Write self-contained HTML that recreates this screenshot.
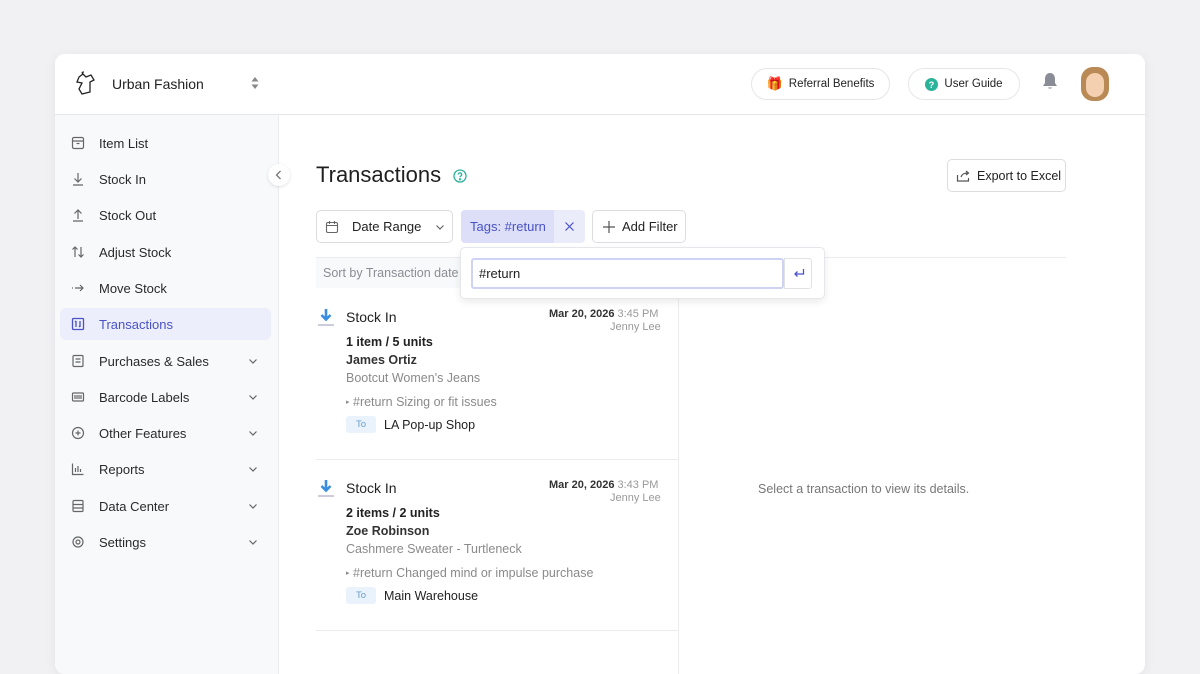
<!DOCTYPE html>
<html><head><meta charset="utf-8"><style>
*{box-sizing:border-box;margin:0;padding:0}
body{width:1200px;height:645px;background:#f1f1f3;font-family:"Liberation Sans",sans-serif;color:#222;position:relative;overflow:hidden}
.card{position:absolute;left:55px;top:54px;width:1090px;height:620px;background:#fff;border-radius:10px;box-shadow:0 2px 12px rgba(0,0,0,.06);overflow:hidden}
.hdr{position:absolute;left:0;top:0;width:100%;height:61px;border-bottom:1px solid #e6e7ea;background:#fff}
.side{position:absolute;left:0;top:61px;width:224px;bottom:0;background:#f8f9fb;border-right:1px solid #ececef}
.abs{position:absolute}
.nav{position:absolute;left:5px;width:211px;height:32px;display:flex;align-items:center;font-size:13px;color:#2a2a2a}
.nav svg{position:absolute;left:11px}
.nav span{position:absolute;left:39px}
.nav .ch{position:absolute;left:187px}
.pill{position:absolute;height:32px;border:1px solid #e5e6ea;border-radius:16px;font-size:11.5px;display:flex;align-items:center;justify-content:center;gap:6px;color:#222}
.btn{position:absolute;border:1px solid #dcdde1;border-radius:5px;background:#fff;display:flex;align-items:center;font-size:13px}
.t{position:absolute;white-space:nowrap}
</style></head><body>
<div class="card">
 <div class="hdr">
  <svg class="abs" style="left:18px;top:17px" width="24" height="26" viewBox="0 0 24 26" fill="none" stroke="#222" stroke-width="1.3"><path d="M6 6 L10 3 L13 6 L18 4 L21 9 L17 11 L17 21 L9 23 L6 18 L9 12 L4 11 Z M10 3 Q8 1 11 1"/></svg>
  <div class="t" style="left:57px;top:22px;font-size:14px;color:#222">Urban Fashion</div>
  <svg class="abs" style="left:195px;top:22px" width="10" height="14" viewBox="0 0 10 14" fill="#888"><path d="M5 1 L8.5 5.5 H1.5Z M5 13 L8.5 8.5 H1.5Z"/></svg>
  <div class="pill" style="left:696px;top:14px;width:139px"><span style="color:#f0a030;font-size:13px">🎁</span>Referral Benefits</div>
  <div class="pill" style="left:853px;top:14px;width:112px"><svg width="13" height="13" viewBox="0 0 14 14"><circle cx="7" cy="7" r="7" fill="#2bb39a"/><text x="7" y="10.5" font-size="10" fill="#fff" text-anchor="middle" font-weight="bold" font-family="Liberation Sans">?</text></svg>User Guide</div>
  <svg class="abs" style="left:987px;top:18px" width="16" height="18" viewBox="0 0 16 18" fill="#8a8d96"><path d="M8 1 C4.5 1 3 4 3 7 V11 L1 14 H15 L13 11 V7 C13 4 11.5 1 8 1Z M6 15.5 H10 C10 17 6 17 6 15.5Z"/></svg>
  <div class="abs" style="left:1026px;top:13px;width:28px;height:34px;border-radius:12px;background:#b98a55"><div style="position:absolute;left:5px;top:6px;width:18px;height:24px;border-radius:9px;background:#f4d0b0"></div></div>
 </div>
 <div class="side">
  <div class="nav" style="top:12px"><svg width="14" height="14" viewBox="0 0 14 14" fill="none" stroke="#666" stroke-width="1.2"><rect x="1.5" y="1.5" width="11" height="11" rx="1.5"/><path d="M1.5 5h11M5.5 7.5h3"/></svg><span>Item List</span></div>
  <div class="nav" style="top:48px"><svg width="14" height="14" viewBox="0 0 14 14" fill="none" stroke="#666" stroke-width="1.2"><path d="M7 1v9M3.5 6.5 7 10l3.5-3.5M2 13h10"/></svg><span>Stock In</span></div>
  <div class="nav" style="top:84px"><svg width="14" height="14" viewBox="0 0 14 14" fill="none" stroke="#666" stroke-width="1.2"><path d="M7 11V2M3.5 5.5 7 2l3.5 3.5M2 13h10"/></svg><span>Stock Out</span></div>
  <div class="nav" style="top:121px"><svg width="14" height="14" viewBox="0 0 14 14" fill="none" stroke="#666" stroke-width="1.2"><path d="M4 12V2M1.5 4.5 4 2l2.5 2.5M10 2v10M7.5 9.5 10 12l2.5-2.5"/></svg><span>Adjust Stock</span></div>
  <div class="nav" style="top:157px"><svg width="14" height="14" viewBox="0 0 14 14" fill="none" stroke="#666" stroke-width="1.2"><path d="M1 7h1M4 7h8M9 4l3 3-3 3"/></svg><span>Move Stock</span></div>
  <div class="nav" style="top:193px;background:#eceefb;border-radius:6px;color:#4a52c8"><svg width="14" height="14" viewBox="0 0 14 14" fill="none" stroke="#4a52c8" stroke-width="1.3"><rect x="1.5" y="1.5" width="11" height="11" rx="1"/><path d="M5 4v6M4 5l1-1M9 4v6M8 9l1 1"/></svg><span>Transactions</span></div>
  <div class="nav" style="top:230px"><svg width="14" height="14" viewBox="0 0 14 14" fill="none" stroke="#666" stroke-width="1.2"><rect x="2" y="1.5" width="10" height="11" rx="1"/><path d="M4.5 5h5M4.5 8h5"/></svg><span>Purchases &amp; Sales</span><svg class="ch" width="12" height="12" viewBox="0 0 12 12" fill="none" stroke="#666" stroke-width="1.2"><path d="M2.5 4.5 6 8l3.5-3.5"/></svg></div>
  <div class="nav" style="top:266px"><svg width="14" height="14" viewBox="0 0 14 14" fill="none" stroke="#666" stroke-width="1.2"><rect x="1.5" y="3" width="11" height="8" rx="1"/><path d="M4 5v4M6 5v4M8 5v4M10 5v4"/></svg><span>Barcode Labels</span><svg class="ch" width="12" height="12" viewBox="0 0 12 12" fill="none" stroke="#666" stroke-width="1.2"><path d="M2.5 4.5 6 8l3.5-3.5"/></svg></div>
  <div class="nav" style="top:302px"><svg width="14" height="14" viewBox="0 0 14 14" fill="none" stroke="#666" stroke-width="1.2"><circle cx="7" cy="7" r="5.5"/><path d="M7 4.5v5M4.5 7h5"/></svg><span>Other Features</span><svg class="ch" width="12" height="12" viewBox="0 0 12 12" fill="none" stroke="#666" stroke-width="1.2"><path d="M2.5 4.5 6 8l3.5-3.5"/></svg></div>
  <div class="nav" style="top:338px"><svg width="14" height="14" viewBox="0 0 14 14" fill="none" stroke="#666" stroke-width="1.2"><path d="M1.5 1.5v11h11M4.5 10V6M7 10V4M9.5 10V7"/></svg><span>Reports</span><svg class="ch" width="12" height="12" viewBox="0 0 12 12" fill="none" stroke="#666" stroke-width="1.2"><path d="M2.5 4.5 6 8l3.5-3.5"/></svg></div>
  <div class="nav" style="top:375px"><svg width="14" height="14" viewBox="0 0 14 14" fill="none" stroke="#666" stroke-width="1.2"><rect x="2" y="1.5" width="10" height="11" rx="1"/><path d="M2 5.5h10M2 9h10"/></svg><span>Data Center</span><svg class="ch" width="12" height="12" viewBox="0 0 12 12" fill="none" stroke="#666" stroke-width="1.2"><path d="M2.5 4.5 6 8l3.5-3.5"/></svg></div>
  <div class="nav" style="top:411px"><svg width="14" height="14" viewBox="0 0 14 14" fill="none" stroke="#666" stroke-width="1.2"><circle cx="7" cy="7" r="2"/><circle cx="7" cy="7" r="5"/></svg><span>Settings</span><svg class="ch" width="12" height="12" viewBox="0 0 12 12" fill="none" stroke="#666" stroke-width="1.2"><path d="M2.5 4.5 6 8l3.5-3.5"/></svg></div>
 </div>
 <div class="abs" style="left:213px;top:110px;width:22px;height:22px;border-radius:11px;background:#fff;box-shadow:0 1px 3px rgba(0,0,0,.12)"><svg style="position:absolute;left:6px;top:5px" width="10" height="12" viewBox="0 0 10 12" fill="none" stroke="#777" stroke-width="1.3"><path d="M6.5 2 2.5 6l4 4"/></svg></div>

 <div class="t" style="left:261px;top:108px;font-size:22px;color:#1f1f1f">Transactions</div>
 <svg class="abs" style="left:398px;top:115px" width="14" height="14" viewBox="0 0 14 14" fill="none" stroke="#2bb39a" stroke-width="1.3"><circle cx="7" cy="7" r="6"/><path d="M5.3 5.5a1.7 1.7 0 1 1 2.4 1.6c-.5.3-.7.6-.7 1.2"/><circle cx="7" cy="10.3" r=".5" fill="#2bb39a"/></svg>
 <div class="btn" style="left:892px;top:105px;width:119px;height:33px;padding-left:8px;gap:6px;color:#222;font-size:12.5px"><svg width="15" height="14" viewBox="0 0 15 14" fill="none" stroke="#555" stroke-width="1.2"><path d="M1.5 6v6h11V9M5 8c1-3 3-4 7-4M10 2l2.5 2L10 6"/></svg>Export to Excel</div>

 <div class="btn" style="left:261px;top:156px;width:137px;height:33px;padding-left:8px;color:#222"><svg width="14" height="14" viewBox="0 0 14 14" fill="none" stroke="#666" stroke-width="1.1"><rect x="1.5" y="2.5" width="11" height="10" rx="1.5"/><path d="M1.5 5.5h11M4.5 1v3M9.5 1v3"/></svg><span style="margin-left:13px">Date Range</span><svg style="margin-left:13px" width="12" height="12" viewBox="0 0 12 12" fill="none" stroke="#666" stroke-width="1.2"><path d="M2.5 4.5 6 8l3.5-3.5"/></svg></div>
 <div class="abs" style="left:406px;top:156px;width:93px;height:33px;background:#dcdff7;border-radius:4px 0 0 4px;color:#4a52c8;font-size:13px;line-height:33px;padding-left:9px">Tags: #return</div>
 <div class="abs" style="left:499px;top:156px;width:31px;height:33px;background:#eaecfa;border-radius:0 4px 4px 0"><svg style="position:absolute;left:10px;top:11px" width="11" height="11" viewBox="0 0 11 11" fill="none" stroke="#4a52c8" stroke-width="1.2"><path d="M1.5 1.5l8 8M9.5 1.5l-8 8"/></svg></div>
 <div class="btn" style="left:537px;top:156px;width:94px;height:33px;padding-left:9px;color:#222"><svg width="14" height="14" viewBox="0 0 14 14" fill="none" stroke="#555" stroke-width="1.2"><path d="M7 1v12M1 7h12"/></svg><span style="margin-left:6px">Add Filter</span></div>

 <div class="abs" style="left:261px;top:203px;width:750px;height:1px;background:#ececef"></div>
 <div class="abs" style="left:261px;top:204px;width:362px;height:30px;background:#f8f9fa"></div>
 <div class="t" style="left:268px;top:212px;font-size:12.5px;color:#8a8d93">Sort by Transaction date</div>
 <div class="abs" style="left:623px;top:200px;width:1px;height:420px;background:#ececef"></div>

 <div class="abs" style="left:405px;top:193px;width:365px;height:52px;background:#fff;border:1px solid #e6e7ea;border-radius:5px;box-shadow:0 3px 8px rgba(0,0,0,.08)"></div>
 <div class="abs" style="left:416px;top:204px;width:313px;height:31px;border:2px solid #cfd2f2;border-radius:3px;font-size:13px;line-height:27px;padding-left:6px;color:#222">#return</div>
 <div class="abs" style="left:729px;top:204px;width:28px;height:31px;border:1px solid #e1e2e6;border-radius:0 3px 3px 0"><svg style="position:absolute;left:8px;top:9px" width="12" height="11" viewBox="0 0 12 11" fill="none" stroke="#4a52c8" stroke-width="1.3"><path d="M10.5 1v5H2M4.5 3.5 2 6l2.5 2.5"/></svg></div>

 <div class="t" style="left:703px;top:428px;font-size:12.5px;color:#777">Select a transaction to view its details.</div>

 <!-- item 1 -->
 <svg class="abs" style="left:262px;top:254px" width="18" height="20" viewBox="0 0 18 20"><path d="M9 1v10M4.5 7 9 11.5 13.5 7" fill="none" stroke="#3a8ee0" stroke-width="2.6"/><rect x="1" y="16" width="16" height="2" fill="#ccd"/></svg>
 <div class="t" style="left:291px;top:255px;font-size:14px;color:#222">Stock In</div>
 <div class="t" style="left:494px;top:254px;font-size:11px;font-weight:bold;color:#333">Mar 20, 2026 <span style="font-weight:normal;color:#999">3:45 PM</span></div>
 <div class="t" style="left:555px;top:267px;font-size:11px;color:#999;width:50px;text-align:right">Jenny Lee</div>
 <div class="t" style="left:291px;top:281px;font-size:12.5px;font-weight:bold;color:#222">1 item / 5 units</div>
 <div class="t" style="left:291px;top:299px;font-size:12.5px;font-weight:bold;color:#333">James Ortiz</div>
 <div class="t" style="left:291px;top:317px;font-size:12.5px;color:#8a8a8a">Bootcut Women's Jeans</div>
 <div class="t" style="left:291px;top:341px;font-size:12.5px;color:#8a8a8a"><span style="font-size:7px;vertical-align:2px">▸</span> #return Sizing or fit issues</div>
 <div class="abs" style="left:291px;top:362px;width:30px;height:17px;background:#eaf3fb;border-radius:3px;font-size:9.5px;color:#6a9cc8;text-align:center;line-height:17px">To</div>
 <div class="t" style="left:329px;top:364px;font-size:12.5px;color:#222">LA Pop-up Shop</div>
 <div class="abs" style="left:261px;top:405px;width:362px;height:1px;background:#ececef"></div>

 <!-- item 2 -->
 <svg class="abs" style="left:262px;top:425px" width="18" height="20" viewBox="0 0 18 20"><path d="M9 1v10M4.5 7 9 11.5 13.5 7" fill="none" stroke="#3a8ee0" stroke-width="2.6"/><rect x="1" y="16" width="16" height="2" fill="#ccd"/></svg>
 <div class="t" style="left:291px;top:426px;font-size:14px;color:#222">Stock In</div>
 <div class="t" style="left:494px;top:425px;font-size:11px;font-weight:bold;color:#333">Mar 20, 2026 <span style="font-weight:normal;color:#999">3:43 PM</span></div>
 <div class="t" style="left:555px;top:438px;font-size:11px;color:#999;width:50px;text-align:right">Jenny Lee</div>
 <div class="t" style="left:291px;top:452px;font-size:12.5px;font-weight:bold;color:#222">2 items / 2 units</div>
 <div class="t" style="left:291px;top:470px;font-size:12.5px;font-weight:bold;color:#333">Zoe Robinson</div>
 <div class="t" style="left:291px;top:488px;font-size:12.5px;color:#8a8a8a">Cashmere Sweater - Turtleneck</div>
 <div class="t" style="left:291px;top:512px;font-size:12.5px;color:#8a8a8a"><span style="font-size:7px;vertical-align:2px">▸</span> #return Changed mind or impulse purchase</div>
 <div class="abs" style="left:291px;top:533px;width:30px;height:17px;background:#eaf3fb;border-radius:3px;font-size:9.5px;color:#6a9cc8;text-align:center;line-height:17px">To</div>
 <div class="t" style="left:329px;top:535px;font-size:12.5px;color:#222">Main Warehouse</div>
 <div class="abs" style="left:261px;top:576px;width:362px;height:1px;background:#ececef"></div>
</div>
</body></html>
